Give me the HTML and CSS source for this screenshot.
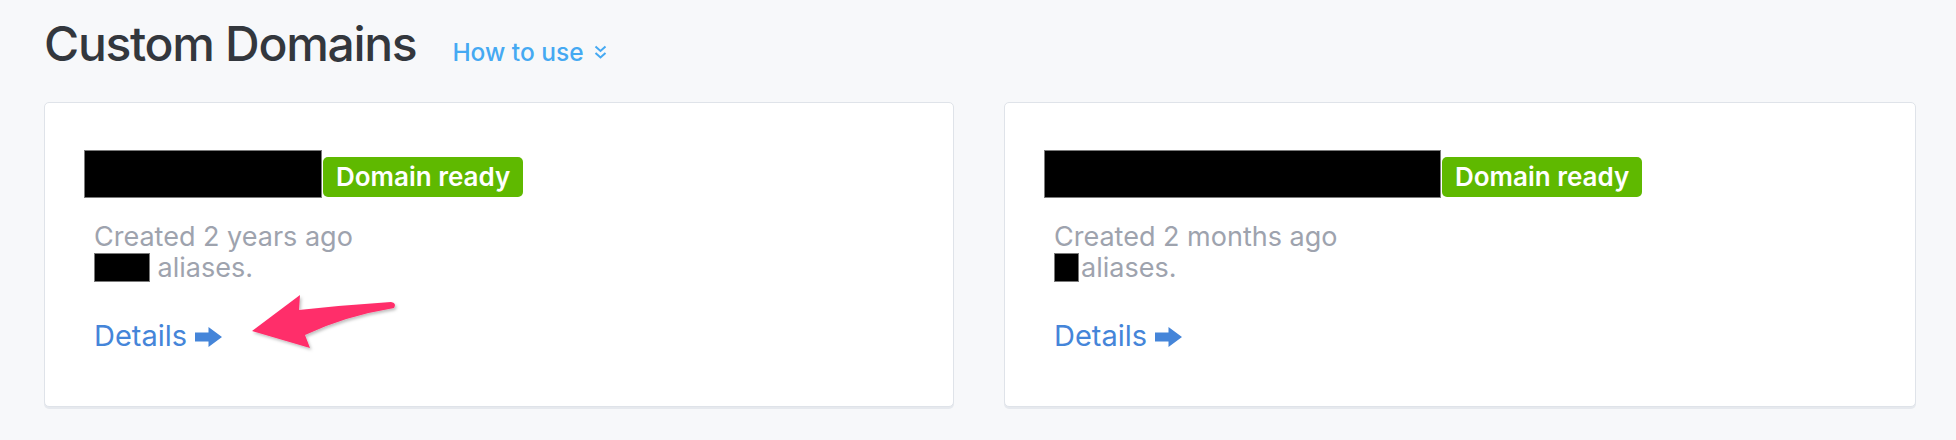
FILE: index.html
```html
<!DOCTYPE html>
<html lang="en">
<head>
<meta charset="utf-8">
<title>Custom Domains</title>
<link rel="stylesheet" href="styles.css">
</head>
<body>
<main class="page">
  <header class="head">
    <h1 class="title">Custom Domains</h1>
    <a class="howto" href="#">How to use
      <svg class="chev" width="13" height="15" viewBox="0 0 13 15"><polyline points="1.5,1.5 6.5,6 11.5,1.5" /><polyline points="1.5,8 6.5,12.5 11.5,8" /></svg>
    </a>
  </header>
  <section class="cards">
    <article class="card">
      <div class="name-row">
        <span class="redact name-1"></span><span class="badge">Domain ready</span>
      </div>
      <div class="meta">
        <div>Created 2 years ago</div>
        <div><span class="redact count-1"></span> aliases.</div>
      </div>
      <a class="details" href="#">Details <svg class="arrow" width="27" height="20" viewBox="0 0 27 20"><path d="M0 5.5H13.5V0L27 10L13.5 20V14.5H0Z"/></svg></a>
    </article>
    <article class="card">
      <div class="name-row">
        <span class="redact name-2"></span><span class="badge">Domain ready</span>
      </div>
      <div class="meta">
        <div>Created 2 months ago</div>
        <div><span class="redact count-2"></span>aliases.</div>
      </div>
      <a class="details" href="#">Details <svg class="arrow" width="27" height="20" viewBox="0 0 27 20"><path d="M0 5.5H13.5V0L27 10L13.5 20V14.5H0Z"/></svg></a>
    </article>
  </section>
  <svg class="annot" width="1956" height="440" viewBox="0 0 1956 440">
    <defs>
      <filter id="sh" x="-20%" y="-50%" width="140%" height="200%">
        <feDropShadow dx="1.5" dy="2" stdDeviation="1.5" flood-color="#000" flood-opacity="0.25"/>
      </filter>
    </defs>
    <path filter="url(#sh)" fill="#ff2d6a" d="M252 331 L300 295 L299 310 Q345 305 391 302 Q397 303 394 308 Q345 316 305 335 L310 348 Z"/>
  </svg>
</main>
</body>
</html>
```
FILE: styles.css
```css
* { box-sizing: border-box; }
html, body { margin: 0; padding: 0; }
body {
  background: #f7f8fa;
  font-family: Inter, "Liberation Sans", sans-serif;
  width: 1956px;
  height: 440px;
  overflow: hidden;
}
.page {
  position: relative;
  padding: 15px 40px 0 44px;
}
.head {
  display: flex;
  align-items: baseline;
  gap: 36px;
  margin-bottom: 29px;
}
.title {
  margin: 0;
  font-size: 48px;
  line-height: 58px;
  font-weight: 500;
  color: #33373d;
  letter-spacing: -1.3px;
}
.howto {
  color: #45a9f2;
  text-decoration: none;
  font-size: 24.5px;
  font-weight: 500;
  display: inline-flex;
  align-items: baseline;
  gap: 10px;
}
.chev { fill: none; stroke: #45a9f2; stroke-width: 2; position: relative; top: -1px; }
.cards {
  display: grid;
  grid-template-columns: 910px 912px;
  gap: 50px;
}
.card {
  background: #fff;
  border: 1px solid #dfe3e9;
  border-radius: 5px;
  box-shadow: 0 2px 0 #e6e9ee;
  padding: 47px 40px 54px 39px;
  height: 305px;
}
.name-row {
  display: flex;
  align-items: flex-end;
  height: 48px;
}
.redact {
  display: inline-block;
  background: #000;
  border: 1px solid #7a7a7a;
}
.name-1 { width: 238px; height: 48px; }
.name-2 { width: 397px; height: 48px; }
.badge {
  background: #5fb900;
  color: #fff;
  font-size: 26px;
  font-weight: 600;
  line-height: 32px;
  padding: 4px 13px;
  border-radius: 5px;
  margin-left: 1px;
  margin-bottom: 1px;
}
.meta {
  margin-top: 23px;
  padding-left: 10px;
  font-size: 27px;
  line-height: 31px;
  color: #9ea3ae;
}
.count-1 { width: 56px; height: 29px; vertical-align: -5px; }
.count-2 { width: 25px; height: 29px; vertical-align: -5px; margin-right: 2px; }
.details {
  display: inline-flex;
  align-items: center;
  gap: 8px;
  margin-top: 37px;
  padding-left: 10px;
  font-size: 29px;
  line-height: 32px;
  color: #4585d9;
  text-decoration: none;
}
.arrow { fill: #4585d9; position: relative; top: 1px; }
.annot {
  position: absolute;
  left: 0;
  top: 0;
  pointer-events: none;
}
```
